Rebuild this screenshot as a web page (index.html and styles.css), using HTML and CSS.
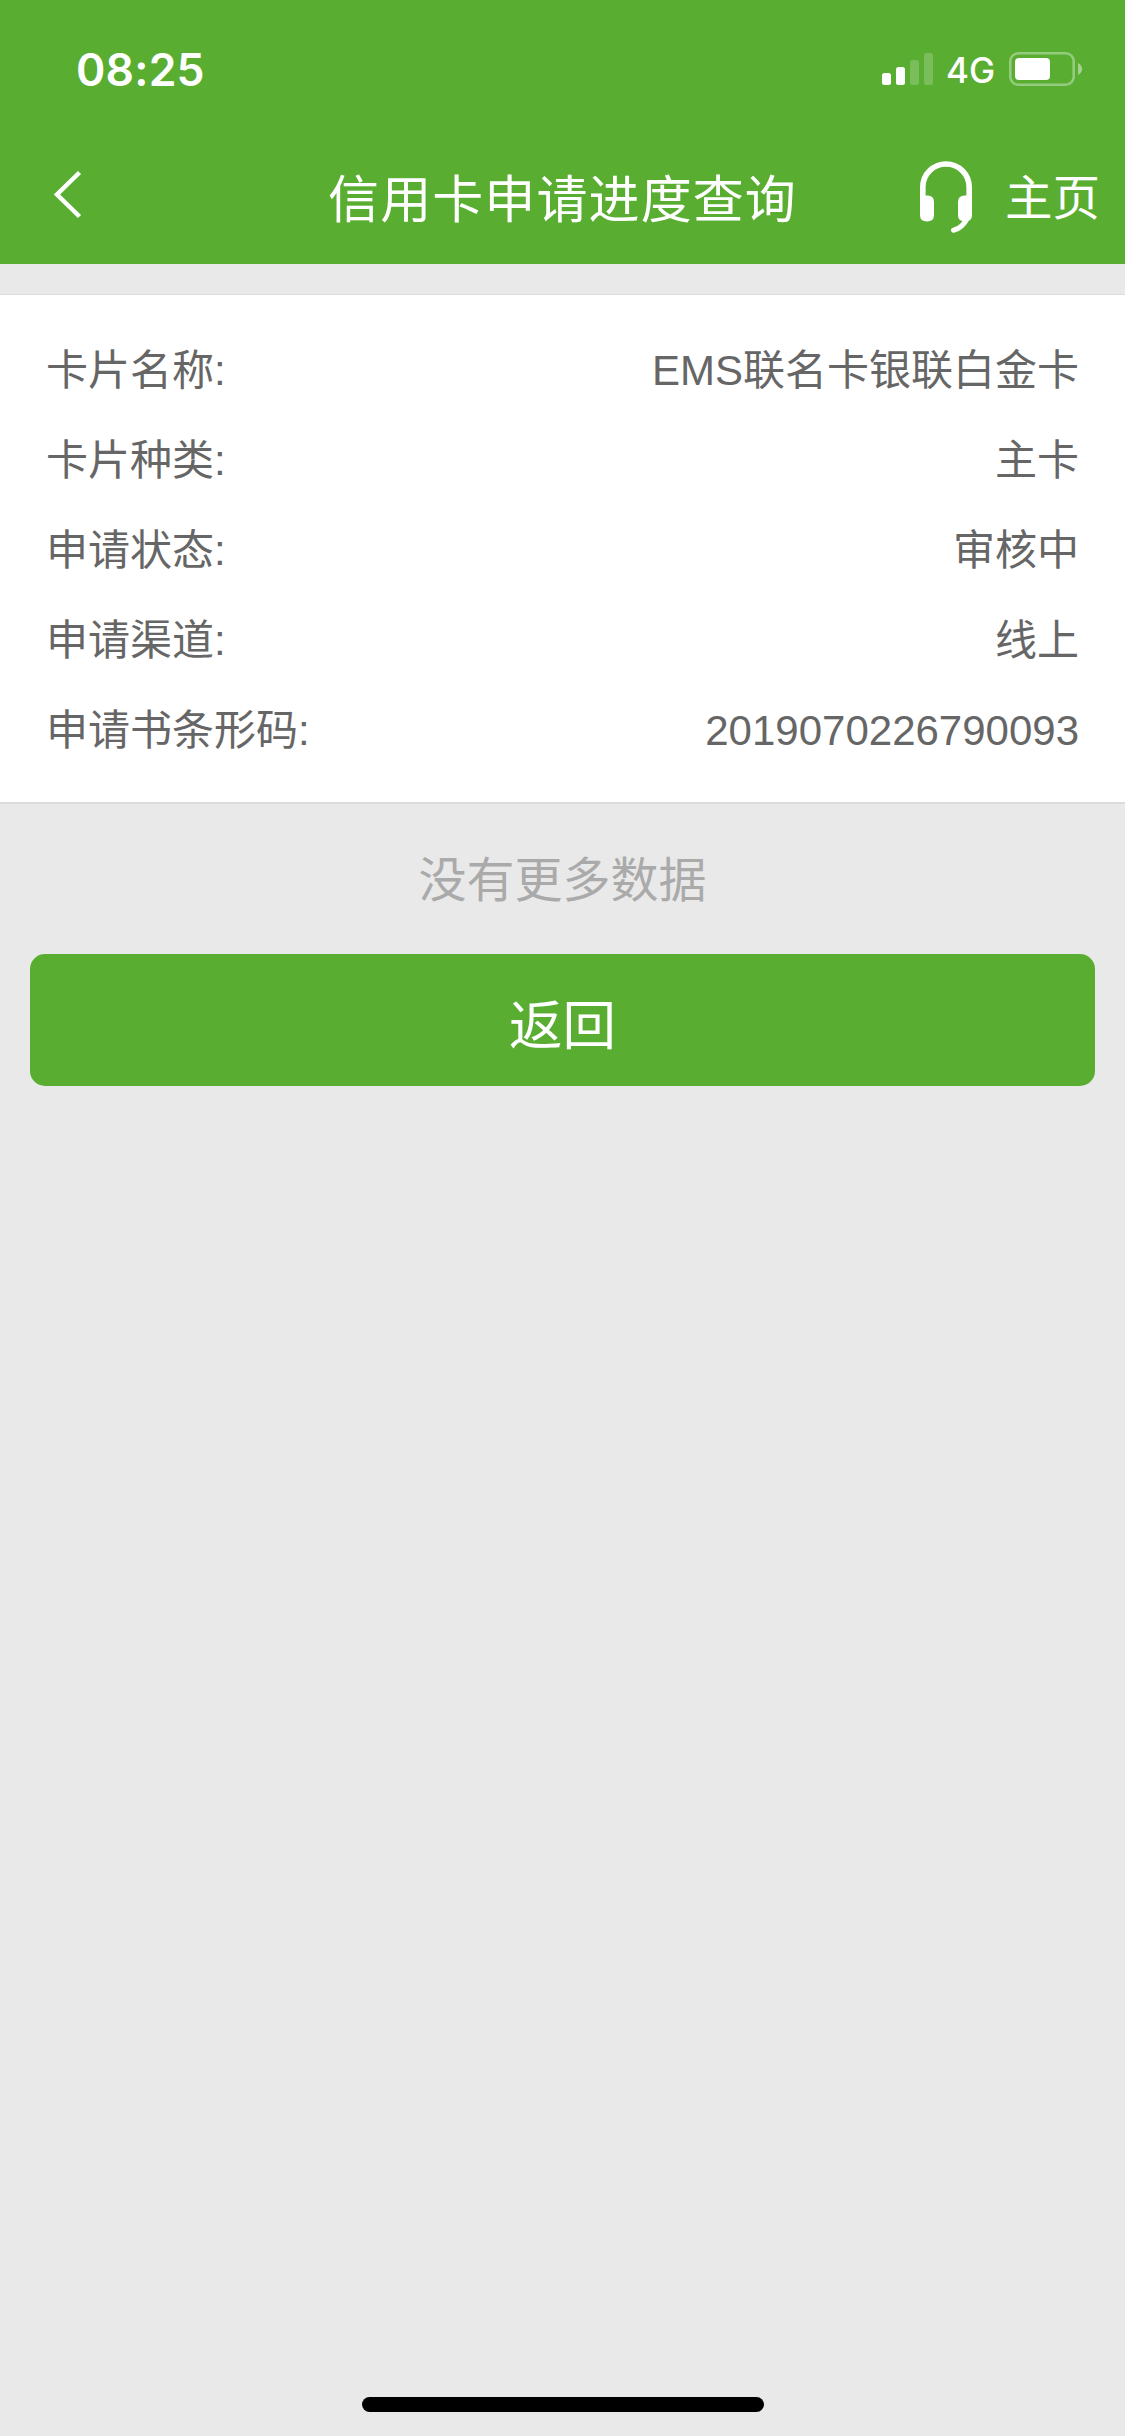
FILE: index.html
```html
<!DOCTYPE html>
<html lang="zh-CN">
<head>
<meta charset="utf-8">
<title>信用卡申请进度查询</title>
<link rel="stylesheet" href="styles.css">
</head>
<body>
<div class="screen">
  <header class="header">
    <div class="status">
      <span class="time">08:25</span>
      <div class="indicators">
        <svg class="signal" width="51" height="34" viewBox="0 0 51 34" fill="#fff">
          <rect x="0" y="21" width="9" height="12" rx="2.5"/>
          <rect x="14" y="15" width="9" height="18" rx="2.5"/>
          <rect x="28" y="8" width="9" height="25" rx="2.5" opacity=".2"/>
          <rect x="42" y="1" width="9" height="32" rx="2.5" opacity=".2"/>
        </svg>
        <span class="network">4G</span>
        <svg class="battery" width="74" height="34" viewBox="0 0 74 34">
          <rect x="1.3" y="1.3" width="63.4" height="31.4" rx="8" fill="none" stroke="#fff" stroke-width="2.6" opacity=".36"/>
          <rect x="6" y="6" width="35" height="22" rx="4" fill="#fff"/>
          <path d="M69 11C74.500 14 74.500 20 69 23Z" fill="#fff" opacity=".45"/>
        </svg>
      </div>
    </div>
    <nav class="nav">
      <div class="nav-left">
        <svg class="back" width="30" height="50" viewBox="0 0 30 50" fill="none" stroke="#fff" stroke-width="4.500">
          <path d="M26.500 3.500L4 25.500L26.500 47.500"/>
        </svg>
      </div>
      <h1 class="title">信用卡申请进度查询</h1>
      <div class="nav-right">
        <svg class="headset" width="52" height="72" viewBox="0 0 52 72">
          <path d="M2.800 52V26.200A23.200 23.200 0 0 1 49.200 26.200V52" fill="none" stroke="#fff" stroke-width="5.600"/>
          <path d="M0 34.500H7.500Q14 34.500 14 41V54Q14 60.500 7 60.500Q0 60.500 0 54Z" fill="#fff"/>
          <path d="M52 34.500H44.500Q38 34.500 38 41V54Q38 60.500 45 60.500Q52 60.500 52 54Z" fill="#fff"/>
          <path d="M47.500 57Q42 67.500 33.500 69.300" fill="none" stroke="#fff" stroke-width="5" stroke-linecap="round"/>
        </svg>
        <span class="home">主页</span>
      </div>
    </nav>
  </header>
  <main class="content">
    <dl class="card">
      <div class="row"><dt>卡片名称:</dt><dd>EMS联名卡银联白金卡</dd></div>
      <div class="row"><dt>卡片种类:</dt><dd>主卡</dd></div>
      <div class="row"><dt>申请状态:</dt><dd>审核中</dd></div>
      <div class="row"><dt>申请渠道:</dt><dd>线上</dd></div>
      <div class="row"><dt>申请书条形码:</dt><dd>2019070226790093</dd></div>
    </dl>
    <p class="empty">没有更多数据</p>
    <button class="return" type="button">返回</button>
  </main>
  <div class="home-bar"></div>
</div>
</body>
</html>
```

FILE: styles.css
```css
* {
  box-sizing: border-box;
  margin: 0;
  padding: 0;
}

body {
  background: #e9e9e9;
  font-family: "Liberation Sans", "Noto Sans CJK SC", sans-serif;
}

.screen {
  display: flex;
  flex-direction: column;
  width: 1125px;
  height: 2436px;
  background: #e9e9e9;
}

.header {
  height: 264px;
  background: #59ae32;
  color: #fff;
}

.status {
  display: flex;
  justify-content: space-between;
  align-items: center;
  height: 138px;
  padding: 0 42px 0 76px;
}

.time {
  padding-top: 1px;
  font: 600 44.500px/54px Inter, sans-serif;
  letter-spacing: 0.200px;
}

.indicators {
  display: flex;
  align-items: center;
}

.network {
  width: 76px;
  padding: 2px 0 0 13px;
  font: 500 35px/42px Inter, sans-serif;
}

.nav {
  display: grid;
  grid-template-columns: 1fr auto 1fr;
  height: 126px;
}

.nav-left {
  display: flex;
  padding: 31px 0 0 53px;
}

.title {
  padding-top: 18px;
  font: 400 51px/80px "Noto Sans CJK SC", sans-serif;
  letter-spacing: 1.100px;
}

.nav-right {
  display: flex;
  justify-content: flex-end;
  align-items: flex-start;
  gap: 33px;
  padding-right: 25px;
}

.headset {
  margin-top: 23px;
}

.home {
  padding-top: 17px;
  font: 400 47.500px/80px "Noto Sans CJK SC", sans-serif;
}

.card {
  margin-top: 30px;
  padding: 31px 46px 26px;
  border-top: 1px solid #dcdcdc;
  border-bottom: 2px solid #dcdcdc;
  background: #fff;
  color: #666;
}

.row {
  display: flex;
  justify-content: space-between;
  height: 90px;
  font-size: 42px;
  line-height: 90px;
}

.empty {
  height: 150px;
  padding-top: 2px;
  color: #aaa;
  font-size: 48px;
  line-height: 150px;
  text-align: center;
}

.return {
  display: block;
  width: 1065px;
  height: 132px;
  margin: 0 auto;
  padding-top: 3px;
  border: 0;
  border-radius: 15px;
  background: #59ae32;
  color: #fff;
  font: 400 53.500px/129px "Noto Sans CJK SC", sans-serif;
}

.home-bar {
  width: 402px;
  height: 15px;
  margin: auto auto 24px;
  border-radius: 8px;
  background: #000;
}
```
